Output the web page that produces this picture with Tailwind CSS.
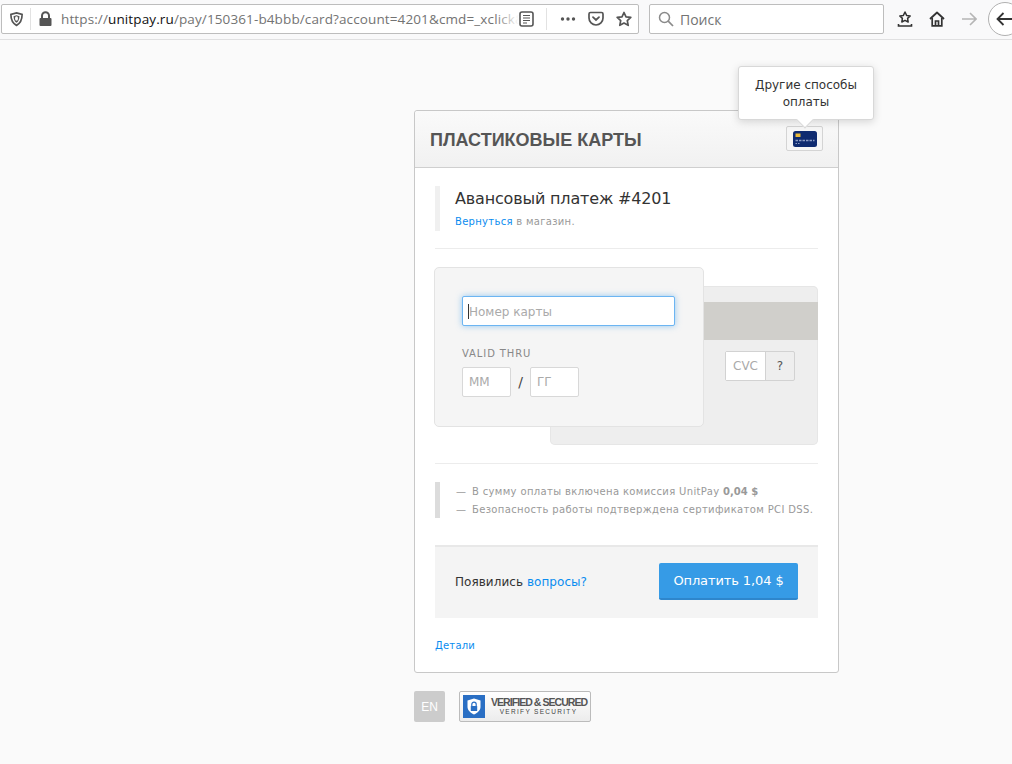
<!DOCTYPE html>
<html lang="ru">
<head>
    <meta charset="UTF-8">
    <script src="https://cdn.jsdelivr.net/npm/@tailwindcss/browser@4"></script>
    <title>UnitPay</title>
</head>
<body class="bg-[#fafafa] h-[764px] w-[1012px] overflow-hidden font-['DejaVu_Sans',sans-serif]">

    <!-- browser toolbar -->
    <div class="h-10 bg-[#f9f9fa] border-b border-[#e0e0e1] pl-px pt-1 flex items-start overflow-hidden font-['Open_Sans',sans-serif]">
        <div class="w-[638px] h-[30px] shrink-0 bg-white border border-[#bdbdbd] rounded-[2px] flex items-center text-[#737373]">
            <svg class="ml-[7px] w-[15px] h-4 shrink-0" viewBox="0 0 16 16"><path d="M8 1.5 L14 3 C14 9 12.5 12.5 8 14.8 C3.5 12.5 2 9 2 3 Z" fill="none" stroke="#555" stroke-width="1.8"/><path d="M8 4 L11.2 5 C11 8.5 10 10.5 8 12 C6 10.5 5 8.5 4.8 5 Z" fill="#555"/><ellipse cx="8" cy="7.5" rx="1.6" ry="2.4" fill="#fff"/></svg>
            <div class="w-px h-[22px] bg-[#e2e2e2] ml-[6px] shrink-0"></div>
            <svg class="ml-[8px] w-[13px] h-4 shrink-0" viewBox="0 0 13 16"><path d="M3 7 V4.8 a3.5 3.5 0 0 1 7 0 V7" fill="none" stroke="#555" stroke-width="2"/><rect x="0.5" y="7" width="12" height="8" rx="1" fill="#555"/></svg>
            <div class="relative ml-[9px] w-[458px] shrink-0 overflow-hidden whitespace-nowrap text-[13.5px] leading-[28px] tracking-[0.12px]">https://<span class="text-[#111]">unitpay.ru</span>/pay/150361-b4bbb/card?account=4201&amp;cmd=_xclick&amp;<div class="absolute right-0 top-0 w-6 h-full bg-gradient-to-r from-white/0 to-white"></div></div>
            <svg class="w-[15px] h-4 shrink-0" viewBox="0 0 15 16"><rect x="1" y="1" width="13" height="14" rx="2" fill="none" stroke="#555" stroke-width="1.6"/><path d="M4 4.5 H11 M4 7 H11 M4 9.5 H11 M4 12 H8" stroke="#555" stroke-width="1.2"/></svg>
            <div class="w-px h-[22px] bg-[#e2e2e2] ml-[12px] shrink-0"></div>
            <svg class="ml-[13px] w-4 h-4 shrink-0" viewBox="0 0 16 16"><circle cx="2.5" cy="8" r="1.7" fill="#555"/><circle cx="8" cy="8" r="1.7" fill="#555"/><circle cx="13.5" cy="8" r="1.7" fill="#555"/></svg>
            <svg class="ml-3 w-4 h-4 shrink-0" viewBox="0 0 16 16"><path d="M1 3 a1.5 1.5 0 0 1 1.5 -1.5 H13.5 A1.5 1.5 0 0 1 15 3 V7 A7 7 0 0 1 1 7 Z" fill="none" stroke="#555" stroke-width="1.7"/><path d="M5 6.2 L8 9 L11 6.2" fill="none" stroke="#555" stroke-width="1.8" stroke-linecap="round"/></svg>
            <svg class="ml-3 w-4 h-4 shrink-0" viewBox="0 0 16 16"><path d="M8 1.5 L10 5.8 L14.8 6.4 L11.3 9.6 L12.2 14.3 L8 12 L3.8 14.3 L4.7 9.6 L1.2 6.4 L6 5.8 Z" fill="none" stroke="#555" stroke-width="1.7" stroke-linejoin="round"/></svg>
        </div>
        <div class="ml-[10px] w-[235px] h-[30px] shrink-0 bg-white border border-[#bdbdbd] rounded-[2px] flex items-center">
            <svg class="ml-2 w-4 h-4 shrink-0" viewBox="0 0 16 16"><circle cx="6.5" cy="6.5" r="5" fill="none" stroke="#8a8a8a" stroke-width="1.5"/><path d="M10.2 10.2 L15 15" stroke="#8a8a8a" stroke-width="1.7"/></svg>
            <span class="ml-[6px] text-[14px] text-[#737373]">Поиск</span>
        </div>
        <svg class="ml-[13px] mt-[7px] w-4 h-4 shrink-0" viewBox="0 0 16 16"><path d="M8 1 L9.6 4.4 L13.2 4.9 L10.6 7.4 L11.2 11 L8 9.3 L4.8 11 L5.4 7.4 L2.8 4.9 L6.4 4.4 Z" fill="none" stroke="#333" stroke-width="1.5" stroke-linejoin="round"/><path d="M1.5 13 V15 H14.5 V13" fill="none" stroke="#333" stroke-width="1.6"/></svg>
        <svg class="ml-4 mt-[7px] w-4 h-4 shrink-0" viewBox="0 0 16 16"><path d="M1 8 L8 1.5 L15 8" fill="none" stroke="#333" stroke-width="1.8" stroke-linejoin="round"/><path d="M3.2 7 V14.8 H12.8 V7 M6.5 14.8 V10 H9.5 V14.8" fill="none" stroke="#333" stroke-width="1.7"/></svg>
        <svg class="ml-4 mt-[7px] w-4 h-4 shrink-0" viewBox="0 0 16 16"><path d="M1 8 H15 M9 2 L15 8 L9 14" fill="none" stroke="#b5b5b5" stroke-width="1.6"/></svg>
        <div class="ml-[11px] -mt-[2px] w-[34px] h-[34px] shrink-0 rounded-full bg-white border border-[#b1b1b1] flex items-center pl-[7px]">
            <svg class="w-4 h-4 shrink-0" viewBox="0 0 16 16"><path d="M16 8 H1.5 M7.5 2 L1.5 8 L7.5 14" fill="none" stroke="#333" stroke-width="1.8"/></svg>
        </div>
    </div>

    <!-- payment form -->
    <div class="pl-[414px] pt-[70px]">
        <div class="relative w-[425px] h-[563px] bg-white border border-[#c8c8c8] rounded-[3px] flex flex-col">
            <div class="h-[57px] shrink-0 border-b border-[#cfcfcf] bg-gradient-to-b from-[#fafafa] to-[#f1f1f1] rounded-t-[3px] flex items-center justify-between pl-[15px] pr-[15px]">
                <h1 class="mt-[2px] font-['Liberation_Sans',sans-serif] font-bold text-[18px] text-[#555]">ПЛАСТИКОВЫЕ КАРТЫ</h1>
                <div class="w-[37px] h-[25px] -mt-px bg-[#f6f6f6] border border-[#d4d4d4] rounded-[2px] flex items-center justify-center">
                    <svg class="w-6 h-4" viewBox="0 0 24 16"><rect width="24" height="16" rx="2.5" fill="#0f2b70"/><rect x="2.5" y="2.5" width="5" height="3.5" fill="#e8b93a"/><path d="M2.5 9.5 H21.5" stroke="#8c9cc4" stroke-width="1.3" stroke-dasharray="2.5 1"/><path d="M2.5 12.5 H7" stroke="#8c9cc4" stroke-width="1" stroke-dasharray="1.5 1"/></svg>
                </div>
            </div>

            <!-- tooltip -->
            <div class="absolute left-[323px] -top-[45px] w-[136px] h-[54px] bg-white border border-[#d8d8d8] rounded-[3px] shadow-[0_2px_8px_rgba(0,0,0,0.15)] text-center text-[12px] leading-[17px] text-[#333] pt-[10px] px-2">
                Другие способы оплаты
                <div class="absolute left-[60px] top-[47px] w-[12px] h-[12px] rotate-45 bg-white border-r border-b border-[#d8d8d8]"></div>
            </div>

            <div class="flex-1 px-5 pt-[18px]">
                <div class="h-[45px] border-l-[5px] border-[#f0f0f0] pl-[15px]">
                    <div class="pt-[2px] text-[16px] leading-[22px] text-[#333] tracking-[-0.17px]">Авансовый платеж #4201</div>
                    <div class="mt-[5px] text-[10px] leading-[14px] tracking-[0.3px] text-[#999]"><span class="text-[#0a8cf0]">Вернуться</span> в магазин.</div>
                </div>
                <div class="mt-[17px] h-px bg-[#ececec]"></div>

                <!-- card faces -->
                <div class="relative mt-[18px] h-[178px]">
                    <div class="absolute left-[115px] top-[19px] w-[268px] h-[159px] bg-[#eeeeee] rounded-[5px] shadow-[inset_0_0_0_1px_#e6e6e6]">
                        <div class="pt-[16px]"><div class="h-[38px] bg-[#d0cfcb]"></div></div>
                        <div class="mt-[11px] ml-[175px] flex w-[70px] h-[30px] border border-[#d2d2d2] rounded-[2px] text-[12px] leading-[28px]">
                            <div class="w-10 bg-white border-r border-[#d2d2d2] text-center text-[#aaa]">CVC</div>
                            <div class="flex-1 text-center text-[#555]">?</div>
                        </div>
                    </div>
                    <div class="absolute -left-px top-0 w-[270px] h-[160px] bg-[#f5f5f5] border border-[#e3e3e3] rounded-[5px] px-[27px] pt-[28px]">
                        <div class="w-[213px] h-[30px] bg-white border border-[#6cb5f2] rounded-[2px] shadow-[0_0_6px_rgba(82,168,236,0.6)] pl-[5px] pt-px text-[12px] leading-[28px] text-[#aaa] flex items-center"><span class="w-px h-[15px] bg-[#333]"></span>Номер карты</div>
                        <div class="mt-[21px] text-[10px] leading-[14px] tracking-[0.9px] text-[#888]">VALID THRU</div>
                        <div class="mt-[6px] flex items-center">
                            <div class="w-[49px] h-[30px] bg-white border border-[#d8d8d8] rounded-[2px] pl-[6px] text-[12px] leading-[28px] text-[#aaa]">ММ</div>
                            <div class="w-[19px] text-center text-[14px] text-[#444]">/</div>
                            <div class="w-[49px] h-[30px] bg-white border border-[#d8d8d8] rounded-[2px] pl-[6px] text-[12px] leading-[28px] text-[#aaa]">ГГ</div>
                        </div>
                    </div>
                </div>

                <div class="mt-[18px] h-px bg-[#ececec]"></div>
                <div class="mt-[18px] h-9 border-l-[5px] border-[#dcdcdc] pl-4 pt-px text-[10px] leading-[18px] tracking-[0.36px] text-[#999]">
                    <div class="whitespace-nowrap"><span class="mr-[2px]">—</span> В сумму оплаты включена комиссия UnitPay <b class="text-[#999] tracking-normal">0,04 $</b></div>
                    <div class="whitespace-nowrap"><span class="mr-[2px]">—</span> Безопасность работы подтверждена сертификатом PCI DSS.</div>
                </div>

                <div class="mt-[27px] h-[73px] bg-[#f4f4f4] border-t-2 border-[#e8e8e8] flex items-center justify-between pl-5 pr-5 pb-[2px]">
                    <div class="text-[12px] text-[#333] tracking-[0.05px]">Появились <span class="text-[#0a8cf0]">вопросы?</span></div>
                    <div class="w-[139px] h-[37px] bg-[#369be6] border-b-2 border-[#2e86cc] rounded-[2px] text-center text-[13px] leading-[35px] text-white tracking-[-0.1px]">Оплатить 1,04 $</div>
                </div>

                <div class="mt-[21px] text-[10px] leading-[14px] tracking-[0.2px] text-[#0a8cf0]">Детали</div>
            </div>
        </div>

        <div class="mt-[18px] flex items-start">
            <div class="w-[31px] h-[31px] bg-[#cccccc] rounded-[2px] text-center text-[12px] leading-[32px] text-white font-['Liberation_Sans',sans-serif]">EN</div>
            <div class="ml-[14px] w-[132px] h-[31px] border border-[#bbb] rounded-[2px] bg-gradient-to-b from-[#ffffff] to-[#ececec] flex items-center pl-[3px]">
                <div class="w-[22px] h-[23px] bg-[#2a6fc4] flex items-center justify-center">
                    <svg class="w-[14px] h-[17px]" viewBox="0 0 14 17"><path d="M7 0.5 L13.5 2.5 V9 C13.5 12.5 10 15 7 16.5 C4 15 0.5 12.5 0.5 9 V2.5 Z" fill="#fff"/><path d="M4.8 8 V6.3 a2.2 2.2 0 0 1 4.4 0 V8" fill="none" stroke="#2a6fc4" stroke-width="1.2"/><rect x="3.8" y="8" width="6.4" height="5" rx="0.5" fill="#2a6fc4"/></svg>
                </div>
                <div class="ml-[6px] w-[95px] font-['Liberation_Sans',sans-serif] text-center">
                    <div class="text-[10.5px] leading-[11px] font-bold text-[#555] tracking-[-0.95px] whitespace-nowrap">VERIFIED &amp; SECURED</div>
                    <div class="text-[6.5px] leading-[8px] text-[#444] tracking-[1.3px] whitespace-nowrap">VERIFY SECURITY</div>
                </div>
            </div>
        </div>
    </div>
</body>
</html>
